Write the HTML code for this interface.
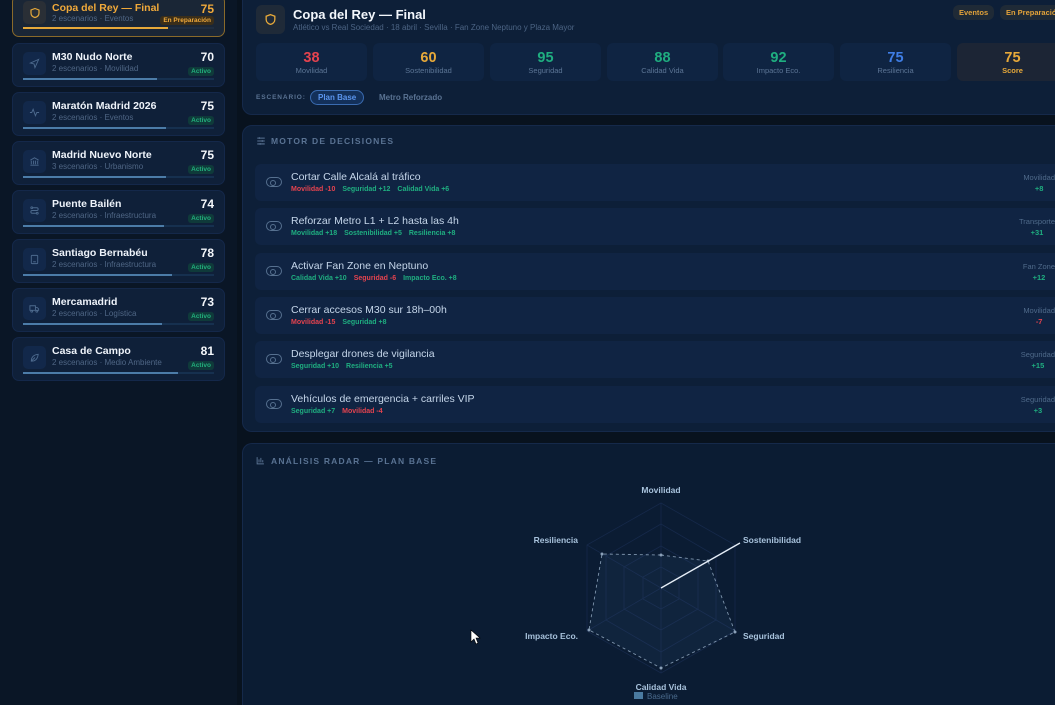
<!DOCTYPE html>
<html><head><meta charset="utf-8">
<style>
*{box-sizing:border-box;margin:0;padding:0}
html{width:1055px;height:705px;overflow:hidden}
body{width:1055px;height:705px;overflow:hidden;background:#08121e;font-family:"Liberation Sans",sans-serif;position:relative;color:#dfe8f3}
.sb{position:absolute;left:0;top:0;width:237px;height:705px;background:#0a1626}
.card{position:absolute;left:12px;width:213px;height:44px;background:#0f2039;border-radius:7px;border:1px solid #14284a}
.card .ic{position:absolute;left:10px;top:8px;width:23px;height:23px;border-radius:5px;background:#12284a;display:flex;align-items:center;justify-content:center}
.card .n{position:absolute;left:39px;top:7px;font-size:10.5px;font-weight:bold;color:#eef3fa}
.card .s{position:absolute;left:39px;top:20px;font-size:8px;color:#4f6685}
.card .v{position:absolute;right:10px;top:6px;font-size:12px;font-weight:bold;color:#f4f7fb}
.card .b{position:absolute;right:10px;top:23px;font-size:6.5px;font-weight:bold;color:#22b07c;background:#0f3a3a;padding:1px 3px;border-radius:3px}
.card .bar{position:absolute;left:10px;right:10px;top:34px;height:2px;background:#16304f}
.card .bar i{display:block;height:2px;background:#4c7ca8}
.panel{position:absolute;left:242px;width:830px;background:#0d1f38;border-radius:10px;border:1px solid #15294a}
.m{position:absolute;top:42px;width:111px;height:38px;border-radius:6px;background:#0f2442;text-align:center}
.m b{display:block;font-size:14.5px;margin-top:7px}
.m span{display:block;font-size:7.5px;color:#5c7595}
.row{position:absolute;left:12px;width:820px;height:37px;border-radius:6px;background:#102443}
.row .t{position:absolute;left:36px;top:7px;font-size:10.5px;color:#c5d6ea}
.row .e{position:absolute;left:36px;top:22px;font-size:7px;font-weight:bold}
.row .e span{margin-right:7px}
.row .tg{position:absolute;left:11px;top:13px;width:16px;height:10px;border:1.3px solid #56708f;border-radius:6px}
.row .tg:after{content:"";position:absolute;left:3px;top:1.5px;width:4px;height:4px;border:1px solid #56708f;border-radius:50%}
.row .r{position:absolute;top:8px;text-align:right;font-size:7.5px;color:#4f6a8a;line-height:11px}
.row .r b{display:block;text-align:center}
.g{color:#1fae80}.rd{color:#e5434f}
.hdr{font-size:8.5px;font-weight:bold;letter-spacing:1.2px;color:#5a7393}
</style></head><body>
<div class="sb">
 <div class="card" style="top:-5px;height:42px;border:1px solid #8a6a2a;background:#1a2636">
  <div class="ic" style="top:5px;background:#2a2f36"><svg width="12" height="12" viewBox="0 0 24 24" fill="none" stroke="#e7a93a" stroke-width="2.4"><path d="M12 3l8 3v6c0 5-4 8-8 9-4-1-8-4-8-9V6z"/></svg></div>
  <div class="n" style="top:6px;color:#f0a93a">Copa del Rey — Final</div><div class="s" style="top:18px">2 escenarios · Eventos</div>
  <div class="v" style="top:6px;color:#f0a93a">75</div><div class="b" style="top:20px;color:#f0a93a;background:#3a2e1a">En Preparación</div>
  <div class="bar" style="top:31px;background:#1f2d40"><i style="width:76%;background:#e7a93a"></i></div>
 </div>
 <div class="card" style="top:43px"><div class="ic"><svg width="11" height="11" viewBox="0 0 24 24" fill="none" stroke="#4d6a8e" stroke-width="2"><path d="M3 11l18-8-8 18-2-8z"/></svg></div><div class="n">M30 Nudo Norte</div><div class="s">2 escenarios · Movilidad</div><div class="v">70</div><div class="b">Activo</div><div class="bar"><i style="width:70%"></i></div></div>
 <div class="card" style="top:92px"><div class="ic"><svg width="11" height="11" viewBox="0 0 24 24" fill="none" stroke="#4d6a8e" stroke-width="2"><path d="M2 12h4l3-7 5 14 3-7h5"/></svg></div><div class="n">Maratón Madrid 2026</div><div class="s">2 escenarios · Eventos</div><div class="v">75</div><div class="b">Activo</div><div class="bar"><i style="width:75%"></i></div></div>
 <div class="card" style="top:141px"><div class="ic"><svg width="11" height="11" viewBox="0 0 24 24" fill="none" stroke="#4d6a8e" stroke-width="2"><path d="M3 9l9-5 9 5M5 10v8M10 10v8M14 10v8M19 10v8M3 20h18"/></svg></div><div class="n">Madrid Nuevo Norte</div><div class="s">3 escenarios · Urbanismo</div><div class="v">75</div><div class="b">Activo</div><div class="bar"><i style="width:75%"></i></div></div>
 <div class="card" style="top:190px"><div class="ic"><svg width="11" height="11" viewBox="0 0 24 24" fill="none" stroke="#4d6a8e" stroke-width="2"><circle cx="6" cy="6" r="2"/><circle cx="18" cy="18" r="2"/><path d="M8 6h9a3 3 0 010 6H7a3 3 0 000 6h9"/></svg></div><div class="n">Puente Bailén</div><div class="s">2 escenarios · Infraestructura</div><div class="v">74</div><div class="b">Activo</div><div class="bar"><i style="width:74%"></i></div></div>
 <div class="card" style="top:239px"><div class="ic"><svg width="11" height="11" viewBox="0 0 24 24" fill="none" stroke="#4d6a8e" stroke-width="2"><rect x="5" y="3" width="14" height="18" rx="2"/><path d="M9 17h6"/></svg></div><div class="n">Santiago Bernabéu</div><div class="s">2 escenarios · Infraestructura</div><div class="v">78</div><div class="b">Activo</div><div class="bar"><i style="width:78%"></i></div></div>
 <div class="card" style="top:288px"><div class="ic"><svg width="11" height="11" viewBox="0 0 24 24" fill="none" stroke="#4d6a8e" stroke-width="2"><path d="M2 6h12v10H2zM14 10h4l3 3v3h-7"/><circle cx="6" cy="18" r="2"/><circle cx="17" cy="18" r="2"/></svg></div><div class="n">Mercamadrid</div><div class="s">2 escenarios · Logística</div><div class="v">73</div><div class="b">Activo</div><div class="bar"><i style="width:73%"></i></div></div>
 <div class="card" style="top:337px"><div class="ic"><svg width="11" height="11" viewBox="0 0 24 24" fill="none" stroke="#4d6a8e" stroke-width="2"><path d="M5 20c0-9 6-14 15-15-1 9-6 15-15 15zM5 20l8-8"/></svg></div><div class="n">Casa de Campo</div><div class="s">2 escenarios · Medio Ambiente</div><div class="v">81</div><div class="b">Activo</div><div class="bar"><i style="width:81%"></i></div></div>
</div>

<div class="panel" style="top:-10px;height:125px">
 <div style="position:absolute;left:13px;top:14px;width:29px;height:29px;border-radius:6px;background:#1f2a38;display:flex;align-items:center;justify-content:center"><svg width="13" height="13" viewBox="0 0 24 24" fill="none" stroke="#e7a93a" stroke-width="2.4"><path d="M12 3l8 3v6c0 5-4 8-8 9-4-1-8-4-8-9V6z"/></svg></div>
 <div style="position:absolute;left:50px;top:16px;font-size:13px;font-weight:bold;color:#f3f7fc">Copa del Rey — Final</div>
 <div style="position:absolute;left:50px;top:32px;font-size:8px;color:#4c6484">Atlético vs Real Sociedad · 18 abril · Sevilla · Fan Zone Neptuno y Plaza Mayor</div>
 <div style="position:absolute;left:710px;top:14px;font-size:7.5px;font-weight:bold;color:#e2a23a;background:#1f2a36;padding:3px 6px;border-radius:6px">Eventos</div>
 <div style="position:absolute;left:757px;top:14px;font-size:7.5px;font-weight:bold;color:#e2a23a;background:#1f2a36;padding:3px 6px;border-radius:6px;white-space:nowrap">En Preparación</div>
 <div class="m" style="left:13px;top:52px"><b style="color:#e5434f">38</b><span>Movilidad</span></div>
 <div class="m" style="left:130px;top:52px"><b style="color:#e7a93a">60</b><span>Sostenibilidad</span></div>
 <div class="m" style="left:247px;top:52px"><b style="color:#1fae80">95</b><span>Seguridad</span></div>
 <div class="m" style="left:364px;top:52px"><b style="color:#1fae80">88</b><span>Calidad Vida</span></div>
 <div class="m" style="left:480px;top:52px"><b style="color:#1fae80">92</b><span>Impacto Eco.</span></div>
 <div class="m" style="left:597px;top:52px"><b style="color:#3f7ee6">75</b><span>Resiliencia</span></div>
 <div class="m" style="left:714px;top:52px;background:#1c2535"><b style="color:#e7a93a">75</b><span style="color:#e7a93a;font-weight:bold">Score</span></div>
 <div class="hdr" style="position:absolute;left:13px;top:103px;font-size:6.5px;letter-spacing:0.9px">ESCENARIO:</div>
 <div style="position:absolute;left:67px;top:99px;font-size:8px;font-weight:bold;color:#5b95ee;border:1px solid #3a6bb0;background:#13305a;padding:2px 7px;border-radius:8px">Plan Base</div>
 <div style="position:absolute;left:136px;top:102px;font-size:8px;font-weight:bold;color:#5a7393">Metro Reforzado</div>
</div>

<div class="panel" style="top:125px;height:307px">
 <svg style="position:absolute;left:13px;top:10px" width="10" height="10" viewBox="0 0 24 24" fill="none" stroke="#5a7393" stroke-width="2.5"><path d="M3 5h18M3 12h18M3 19h18M8 3v4M15 10v4M10 17v4"/></svg>
 <div class="hdr" style="position:absolute;left:28px;top:10px">MOTOR DE DECISIONES</div>
 <div class="row" style="top:38px"><div class="tg"></div><div class="t">Cortar Calle Alcalá al tráfico</div><div class="e"><span class="rd">Movilidad -10</span><span class="g">Seguridad +12</span><span class="g">Calidad Vida +6</span></div><div class="r" style="right:20px">Movilidad<b class="g">+8</b></div></div>
 <div class="row" style="top:82px"><div class="tg"></div><div class="t">Reforzar Metro L1 + L2 hasta las 4h</div><div class="e"><span class="g">Movilidad +18</span><span class="g">Sostenibilidad +5</span><span class="g">Resiliencia +8</span></div><div class="r" style="right:20px">Transporte<b class="g">+31</b></div></div>
 <div class="row" style="top:127px"><div class="tg"></div><div class="t">Activar Fan Zone en Neptuno</div><div class="e"><span class="g">Calidad Vida +10</span><span class="rd">Seguridad -6</span><span class="g">Impacto Eco. +8</span></div><div class="r" style="right:20px">Fan Zone<b class="g">+12</b></div></div>
 <div class="row" style="top:171px"><div class="tg"></div><div class="t">Cerrar accesos M30 sur 18h–00h</div><div class="e"><span class="rd">Movilidad -15</span><span class="g">Seguridad +8</span></div><div class="r" style="right:20px">Movilidad<b class="rd">-7</b></div></div>
 <div class="row" style="top:215px"><div class="tg"></div><div class="t">Desplegar drones de vigilancia</div><div class="e"><span class="g">Seguridad +10</span><span class="g">Resiliencia +5</span></div><div class="r" style="right:20px">Seguridad<b class="g">+15</b></div></div>
 <div class="row" style="top:260px"><div class="tg"></div><div class="t">Vehículos de emergencia + carriles VIP</div><div class="e"><span class="g">Seguridad +7</span><span class="rd">Movilidad -4</span></div><div class="r" style="right:20px">Seguridad<b class="g">+3</b></div></div>
</div>

<div class="panel" style="top:443px;height:262px;border-bottom:none;border-radius:10px 10px 0 0;background:#0b1c33">
 <svg style="position:absolute;left:13px;top:12px" width="9" height="9" viewBox="0 0 24 24" fill="none" stroke="#5a7393" stroke-width="2.5"><path d="M3 3v18h18M8 17V9M13 17V5M18 17v-6"/></svg>
 <div class="hdr" style="position:absolute;left:28px;top:12px">ANÁLISIS RADAR — PLAN BASE</div>
</div>
<svg style="position:absolute;left:0;top:0" width="1055" height="705">
 <g stroke="#16294a" fill="none" stroke-width="0.8">
  <polygon points="661,503 735,545 735,631 661,673 587,631 587,545"/>
  <polygon points="661,524 716,556 716,620 661,652 606,620 606,556"/>
  <polygon points="661,546 698,567 698,609 661,630 624,609 624,567"/>
  <polygon points="661,567 679,577 679,599 661,609 643,599 643,577"/>
  <path d="M661,588L661,503M661,588L735,545M661,588L735,631M661,588L661,673M661,588L587,631M661,588L587,545"/>
 </g>
 <polygon points="661,555 708,561 735,632 661,668 589,630 602,554" fill="rgba(70,110,160,0.1)" stroke="#7f95ad" stroke-width="0.9" stroke-dasharray="3,3"/>
 <g fill="#8aa0b8"><circle cx="661" cy="555" r="1.5"/><circle cx="708" cy="561" r="1.5"/><circle cx="735" cy="632" r="1.5"/><circle cx="661" cy="668" r="1.5"/><circle cx="589" cy="630" r="1.5"/><circle cx="602" cy="554" r="1.5"/></g>
 <line x1="661" y1="588" x2="740" y2="543" stroke="#e6eef7" stroke-width="1.3"/>
 <g font-family="Liberation Sans" font-size="8.5" font-weight="bold" fill="#a8c2dc">
  <text x="661" y="493" text-anchor="middle">Movilidad</text>
  <text x="743" y="543">Sostenibilidad</text>
  <text x="743" y="639">Seguridad</text>
  <text x="661" y="690" text-anchor="middle">Calidad Vida</text>
  <text x="578" y="639" text-anchor="end">Impacto Eco.</text>
  <text x="578" y="543" text-anchor="end">Resiliencia</text>
 </g>
 <rect x="634" y="692" width="9" height="7" fill="#4a7aa0"/>
 <text x="647" y="699" font-family="Liberation Sans" font-size="8" fill="#4a6a8c">Baseline</text>
 <path d="M471,630 L471,642 L474,639 L476,644 L478,643 L476,638 L480,638 Z" fill="#fff" stroke="#000" stroke-width="0.6"/>
</svg>
</body></html>
